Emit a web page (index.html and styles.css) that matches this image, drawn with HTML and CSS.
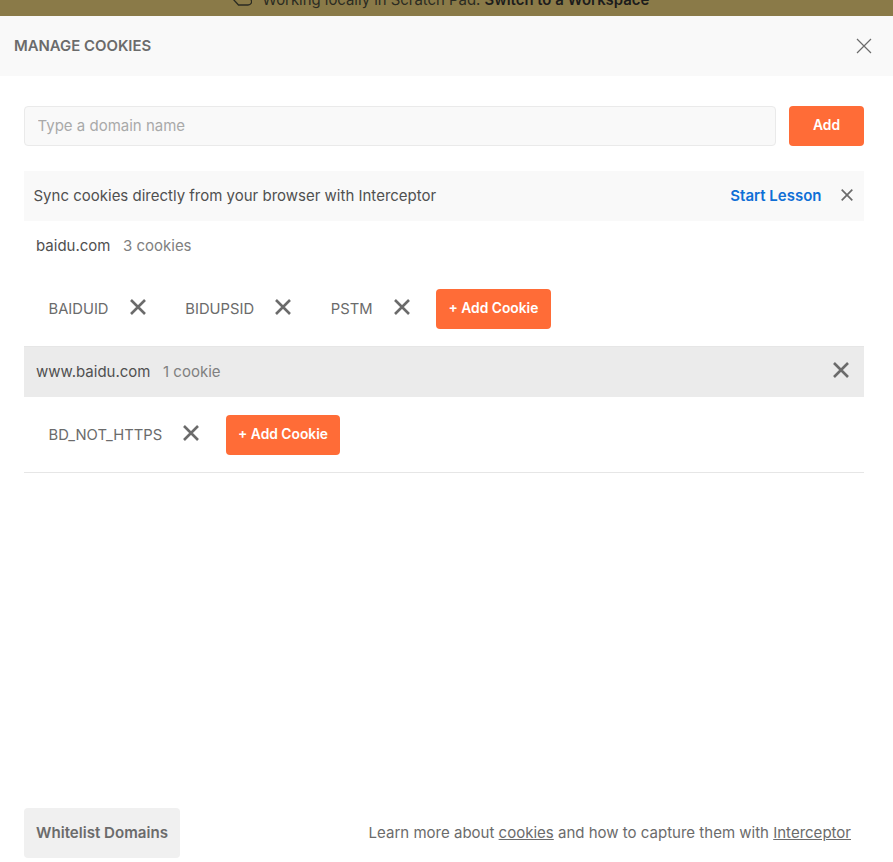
FILE: index.html
```html
<!DOCTYPE html>
<html lang="en">
<head>
<meta charset="utf-8">
<title>Manage Cookies</title>
<link rel="stylesheet" href="styles.css">
</head>
<body>
<div class="app-banner">
  <svg class="banner-icon" width="20" height="20" viewBox="0 0 20 20" fill="none" stroke="#2b2b22" stroke-width="1.3"><path d="M1 8 L6.5 14 H16 C19 14 20.5 11 19 9"/><path d="M4 9 C4 6 7 4 10 4"/></svg>
  <span class="banner-text">Working locally in Scratch Pad. <b>Switch to a Workspace</b></span>
</div>
<main class="modal">
  <header class="modal-header">
    <h1 class="modal-title">MANAGE COOKIES</h1>
    <button class="icon-btn" aria-label="Close">
      <svg width="16" height="16" viewBox="0 0 16 16" fill="none" stroke="#6b6b6b" stroke-width="1.2"><path d="M1 1 L15 15 M15 1 L1 15"/></svg>
    </button>
  </header>
  <section class="modal-body">
    <div class="domain-form">
      <input class="domain-input" type="text" placeholder="Type a domain name">
      <button class="btn-primary btn-add">Add</button>
    </div>
    <div class="sync-bar">
      <span class="sync-text">Sync cookies directly from your browser with Interceptor</span>
      <a class="sync-link" href="#">Start Lesson</a>
      <button class="icon-btn sync-close" aria-label="Dismiss">
        <svg width="12" height="12" viewBox="0 0 12 12" fill="none" stroke="#6b6b6b" stroke-width="1.7"><path d="M0.7 0.7 L11.3 11.3 M11.3 0.7 L0.7 11.3"/></svg>
      </button>
    </div>
    <div class="domain-row">
      <span class="domain-name">baidu.com</span><span class="domain-count">3 cookies</span>
    </div>
    <div class="cookie-row">
      <span class="cookie"><span class="cookie-name">BAIDUID</span><svg class="x" width="18" height="18" viewBox="0 0 18 18" fill="none" stroke="#6b6b6b" stroke-width="2.6"><path d="M2 2 L16 16 M16 2 L2 16"/></svg></span>
      <span class="cookie"><span class="cookie-name">BIDUPSID</span><svg class="x" width="18" height="18" viewBox="0 0 18 18" fill="none" stroke="#6b6b6b" stroke-width="2.6"><path d="M2 2 L16 16 M16 2 L2 16"/></svg></span>
      <span class="cookie"><span class="cookie-name">PSTM</span><svg class="x" width="18" height="18" viewBox="0 0 18 18" fill="none" stroke="#6b6b6b" stroke-width="2.6"><path d="M2 2 L16 16 M16 2 L2 16"/></svg></span>
      <button class="btn-primary btn-cookie">+ Add Cookie</button>
    </div>
    <div class="domain-row is-active">
      <span class="domain-name">www.baidu.com</span><span class="domain-count">1 cookie</span>
      <svg class="row-x" width="18" height="18" viewBox="0 0 18 18" fill="none" stroke="#6b6b6b" stroke-width="2.6"><path d="M2 2 L16 16 M16 2 L2 16"/></svg>
    </div>
    <div class="cookie-row">
      <span class="cookie"><span class="cookie-name">BD_NOT_HTTPS</span><svg class="x" width="18" height="18" viewBox="0 0 18 18" fill="none" stroke="#6b6b6b" stroke-width="2.6"><path d="M2 2 L16 16 M16 2 L2 16"/></svg></span>
      <button class="btn-primary btn-cookie">+ Add Cookie</button>
    </div>
  </section>
  <footer class="modal-footer">
    <button class="btn-secondary">Whitelist Domains</button>
    <p class="footer-note">Learn more about <a href="#">cookies</a> and how to capture them with <a href="#">Interceptor</a></p>
  </footer>
</main>
</body>
</html>
```

FILE: styles.css
```css
* { box-sizing: border-box; }
html, body { height: 100%; }
body {
  margin: 0;
  font-family: Inter, "Liberation Sans", sans-serif;
  font-size: 15px;
  line-height: 20px;
  color: #505050;
  background: #fff;
  display: flex;
  flex-direction: column;
  overflow: hidden;
}
button { font-family: inherit; cursor: pointer; }

.app-banner {
  flex: none;
  height: 16px;
  background: #8a7a48;
  display: flex;
  justify-content: center;
  align-items: flex-end;
  gap: 10px;
  overflow: hidden;
  padding-right: 11.5px;
  color: #2b2b22;
  font-size: 14.9px;
  line-height: 22px;
}
.banner-icon { flex: none; margin-bottom: 5px; }
.banner-text { flex: none; margin-bottom: 5px; }
.banner-text b { font-weight: 600; color: #1c1c1c; }

.modal { flex: 1; display: flex; flex-direction: column; min-height: 0; }
.modal-header {
  height: 60px;
  flex: none;
  background: #f9f9f9;
  display: flex;
  align-items: center;
  justify-content: space-between;
  padding: 0 21px 0 14px;
}
.modal-title { margin: 0; font-size: 14.9px; line-height: 20px; font-weight: 600; color: #6b6b6b; }
.icon-btn { border: 0; background: none; padding: 0; display: flex; }

.modal-body { flex: 1; padding: 30px 29px 0 24px; display: flex; flex-direction: column; min-height: 0; }
.domain-form { display: flex; gap: 13px; height: 40px; margin-bottom: 25px; }
.domain-input {
  flex: 1;
  min-width: 0;
  border: 1px solid #eaeaea;
  border-radius: 4px;
  background: #f9f9f9;
  padding: 0 12.5px 1px;
  font: 15px Inter, "Liberation Sans", sans-serif;
  color: #505050;
}
.domain-input::placeholder { color: #a9a9a9; opacity: 1; }
.btn-primary {
  border: 0;
  border-radius: 4px;
  background: #ff6c37;
  color: #fff;
  font-size: 13.8px;
  font-weight: 600;
  padding: 0 0 2px;
}
.btn-add { width: 75px; }
.btn-cookie { height: 40px; width: 114.5px; }

.sync-bar {
  height: 50px;
  background: #f9f9f9;
  display: flex;
  align-items: center;
  padding: 0 11.5px 0 9.5px;
  flex: none;
}
.sync-text { flex: 1; color: #505050; }
.sync-link { color: #0f6fd6; font-weight: 600; text-decoration: none; margin-right: 19px; }
.sync-close { margin-bottom: 3px; }

.domain-row {
  height: 50px;
  flex: none;
  display: flex;
  align-items: center;
  padding: 0 12px;
}
.domain-row.is-active { background: #ebebeb; }
.domain-name { color: #505050; margin-right: 12.5px; }
.domain-count { color: #808080; flex: 1; }
.row-x { margin-right: 2px; margin-bottom: 4px; }

.cookie-row {
  height: 76px;
  flex: none;
  display: flex;
  align-items: center;
  padding-left: 24.5px;
  border-bottom: 1px solid #e6e6e6;
}
.cookie { display: flex; align-items: center; margin-right: 38.8px; }
.cookie:nth-last-child(2) { margin-right: 25.6px; }
.cookie-name { color: #6b6b6b; margin-right: 20px; font-size: 14.75px; }
.x { margin-bottom: 3px; }

.modal-footer {
  flex: none;
  display: flex;
  align-items: center;
  justify-content: space-between;
  padding: 0 42px 4px 24px;
}
.btn-secondary {
  width: 156px;
  height: 50px;
  border: 0;
  border-radius: 4px;
  background: #f0f0f0;
  color: #6b6b6b;
  font-size: 15.1px;
  font-weight: 600;
  padding: 0 0 1px;
}
.footer-note { margin: 0 0 1px; color: #6b6b6b; font-size: 15.03px; }
.footer-note a { color: inherit; }
```
